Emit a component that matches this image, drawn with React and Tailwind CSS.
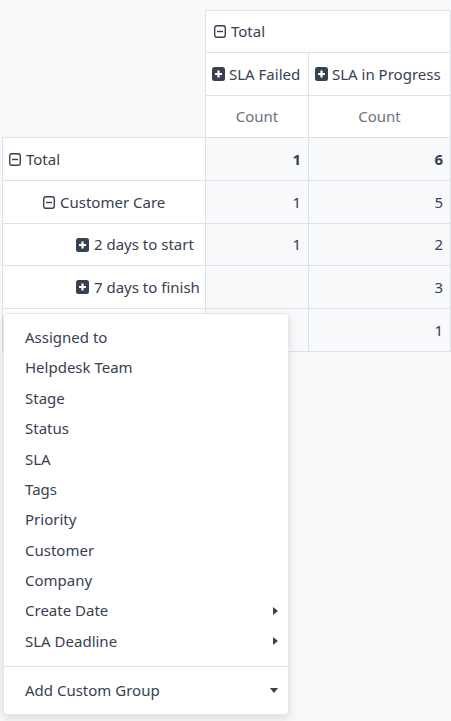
import React from 'react'

const MinusSquare = () => (
  <svg width="12" height="13" viewBox="0 0 12 13" className="shrink-0">
    <rect x="0.7" y="0.7" width="10.6" height="11.6" rx="2.2" fill="none" stroke="currentColor" strokeWidth="1.4" />
    <path d="M3 6.5h6" stroke="currentColor" strokeWidth="1.4" />
  </svg>
)

const PlusSquare = () => (
  <svg width="13" height="14" viewBox="0 0 13 14" className="shrink-0">
    <rect width="13" height="14" rx="2.5" fill="currentColor" />
    <path d="M6.5 3.5v7M3 7h7" stroke="white" strokeWidth="2.2" />
  </svg>
)

const rows = [
  { label: 'Total', level: 0, open: true, a: '1', b: '6', bold: true, h: 'h-[43px]' },
  { label: 'Customer Care', level: 1, open: true, a: '1', b: '5', h: 'h-[43px]' },
  { label: '2 days to start', level: 2, open: false, a: '1', b: '2', h: 'h-[42px]' },
  { label: '7 days to finish', level: 2, open: false, a: '', b: '3', h: 'h-[43px]' },
  { label: '', level: 1, open: false, a: '', b: '1', hidden: true, h: 'h-[43px]' },
]

const pad = ['pl-[6px]', 'pl-[40px]', 'pl-[73px]']

const items = [
  'Assigned to',
  'Helpdesk Team',
  'Stage',
  'Status',
  'SLA',
  'Tags',
  'Priority',
  'Customer',
  'Company',
]

export default function App() {
  const cell = 'border border-[#dee2e6] p-0'
  return (
    <div className="relative min-h-screen bg-[#f8f9fa] text-[15px] text-[#374151] font-['Noto_Sans',sans-serif]">
      <div className="pt-[10px] pl-[2px]">
        <table className="table-fixed border-collapse">
          <colgroup>
            <col className="w-[203px]" />
            <col className="w-[103px]" />
            <col className="w-[142px]" />
          </colgroup>
          <thead>
            <tr>
              <th rowSpan={3} className="p-0 border-0 border-r border-b border-[#dee2e6]"></th>
              <th colSpan={2} className={`${cell} h-[42px] bg-white font-normal text-left pl-[8px]`}>
                <span className="flex items-center gap-[5px]"><MinusSquare />Total</span>
              </th>
            </tr>
            <tr>
              <th className={`${cell} h-[43px] bg-white font-normal text-left pl-[6px]`}>
                <span className="flex items-center gap-[4px]"><PlusSquare />SLA Failed</span>
              </th>
              <th className={`${cell} h-[43px] bg-white font-normal text-left pl-[6px]`}>
                <span className="flex items-center gap-[4px]"><PlusSquare />SLA in Progress</span>
              </th>
            </tr>
            <tr>
              <th className={`${cell} h-[42px] bg-white font-normal text-center text-[#6b7280]`}>Count</th>
              <th className={`${cell} h-[42px] bg-white font-normal text-center text-[#6b7280]`}>Count</th>
            </tr>
          </thead>
          <tbody>
            {rows.map((r, i) => (
              <tr key={i}>
                <td className={`${cell} ${r.h} bg-white ${pad[r.level]}`}>
                  {!r.hidden && (
                    <span className="flex items-center gap-[5px]">
                      {r.open ? <MinusSquare /> : <PlusSquare />}
                      {r.label}
                    </span>
                  )}
                </td>
                <td className={`${cell} ${r.h} bg-[#f8f9fa] text-right pr-[7px] ${r.bold ? 'font-bold' : ''}`}>{r.a}</td>
                <td className={`${cell} ${r.h} bg-[#f8f9fa] text-right pr-[7px] ${r.bold ? 'font-bold' : ''}`}>{r.b}</td>
              </tr>
            ))}
          </tbody>
        </table>
      </div>

      <div className="absolute left-[3px] top-[313px] w-[286px] bg-white rounded-[4px] border border-[#e5e7eb] shadow-[0_4px_10px_rgba(0,0,0,0.12)] pt-[8px] pb-[8px]">
        {items.map((t) => (
          <div key={t} className="pl-[21px] pr-[10px] h-[30.4px] flex items-center">{t}</div>
        ))}
        {['Create Date', 'SLA Deadline'].map((t) => (
          <div key={t} className="pl-[21px] pr-[10px] h-[30.4px] flex items-center justify-between">
            <span>{t}</span>
            <svg width="5" height="8" viewBox="0 0 5 8"><path d="M0 0l5 4-5 4z" fill="currentColor" /></svg>
          </div>
        ))}
        <div className="border-t border-[#dee2e6] mt-[10px] mb-[8px]" />
        <div className="pl-[21px] pr-[10px] h-[30.4px] flex items-center justify-between">
          <span>Add Custom Group</span>
          <svg width="8" height="5" viewBox="0 0 8 5"><path d="M0 0h8L4 5z" fill="currentColor" /></svg>
        </div>
      </div>
    </div>
  )
}
